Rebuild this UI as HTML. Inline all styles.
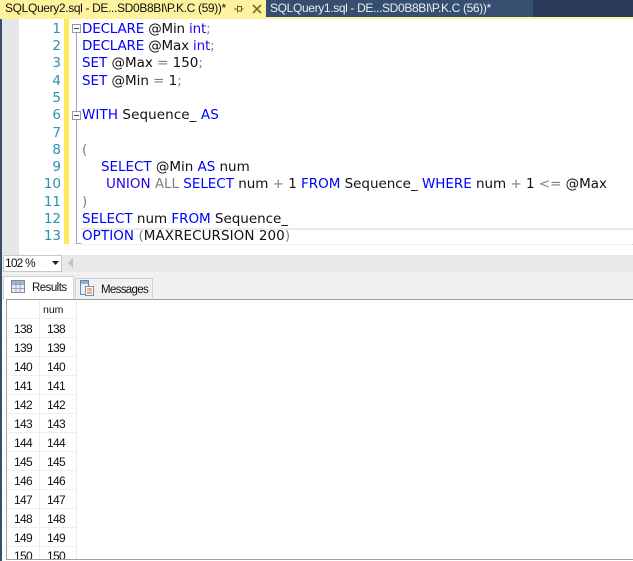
<!DOCTYPE html>
<html>
<head>
<meta charset="utf-8">
<style>
html,body{margin:0;padding:0;width:633px;height:561px;overflow:hidden;background:#fff}
div{position:absolute}
#root{left:0;top:0;width:633px;height:561px;overflow:hidden;background:#fff}
.code{left:82px;font:13.5px/17px "DejaVu Sans",Verdana,sans-serif;white-space:pre;color:#111;letter-spacing:-.03px}
.ln{left:20px;width:41px;text-align:right;font:13.5px/17px "DejaVu Sans",sans-serif;color:#2b91af}
.k{color:#0000ff}.g{color:#808080}.f{color:#2a00f0}
.tab{font:12px/17px "Liberation Sans",sans-serif;white-space:pre;top:0;letter-spacing:-.35px}
.cell{font:12px/19px "Liberation Sans",sans-serif;color:#111;text-align:left;letter-spacing:-.7px}
.fold{width:7px;height:7px;border:1px solid #999;background:#fff;box-sizing:content-box}
.fold:after{content:"";position:absolute;left:1px;top:3px;width:5px;height:1px;background:#444}
.r{left:0;width:70px;height:1px;background:#eeeef0}
</style>
</head>
<body>
<div id="root">
  <!-- tab strip -->
  <div style="left:0;top:0;width:633px;height:17px;background:#2a3b5a"></div>
  <div style="left:266px;top:0;width:267px;height:17px;background:#364e6f"></div>
  <div style="left:0;top:0;width:266px;height:17px;background:#fff29d"></div>
  <div style="left:0;top:17px;width:633px;height:2px;background:#fff29d"></div>
  <div class="tab" style="left:5px;color:#111">SQLQuery2.sql - DE...SD0B8BI\P.K.C (59))*</div>
  <div class="tab" style="left:270px;color:#e8eef6">SQLQuery1.sql - DE...SD0B8BI\P.K.C (56))*</div>
  <svg style="position:absolute;left:232px;top:3px" width="34" height="12" viewBox="0 0 34 12">
    <path d="M2 6h3M5.500 3.500h4v4.500h-4zM5.500 2.500v7M9.500 6h2" stroke="#6b5f2a" fill="none"/>
    <path d="M21 2l8 8M29 2l-8 8" stroke="#75693a" stroke-width="1.600" fill="none"/>
  </svg>

  <!-- left window edge -->
  <div style="left:0;top:19px;width:19px;height:236px;background:#e6e7e8"></div>
  <div style="left:0;top:19px;width:2px;height:542px;background:#3b4d6e"></div>

  <!-- yellow modified bar -->
  <div style="left:64px;top:19px;width:5px;height:225px;background:#fdeb5c"></div>

  <!-- outline guide -->
  <div style="left:76px;top:28px;width:1px;height:216px;background:#a8a8a8"></div>
  <div style="left:76px;top:243px;width:5px;height:1px;background:#a8a8a8"></div>

  <!-- current line -->
  <div style="left:81px;top:228px;width:552px;height:14px;border-top:2px solid #eaeaea;border-bottom:1px dotted #d8d8e0"></div>

  <!-- line numbers -->
  <div class="ln" style="top:21px">1</div>
  <div class="ln" style="top:38px">2</div>
  <div class="ln" style="top:55px">3</div>
  <div class="ln" style="top:73px">4</div>
  <div class="ln" style="top:90px">5</div>
  <div class="ln" style="top:107px">6</div>
  <div class="ln" style="top:125px">7</div>
  <div class="ln" style="top:142px">8</div>
  <div class="ln" style="top:159px">9</div>
  <div class="ln" style="top:176px">10</div>
  <div class="ln" style="top:194px">11</div>
  <div class="ln" style="top:211px">12</div>
  <div class="ln" style="top:228px">13</div>

  <div class="fold" style="left:72px;top:24px"></div>
  <div class="fold" style="left:72px;top:111px"></div>

  <!-- code -->
  <div class="code" style="top:21px;letter-spacing:-.18px"><span class="k">DECLARE</span> @Min <span class="f">int</span><span class="g">;</span></div>
  <div class="code" style="top:38px;letter-spacing:-.18px"><span class="k">DECLARE</span> @Max <span class="f">int</span><span class="g">;</span></div>
  <div class="code" style="top:55px"><span class="k">SET</span> @Max <span class="g">=</span> 150<span class="g">;</span></div>
  <div class="code" style="top:73px"><span class="k">SET</span> @Min <span class="g">=</span> 1<span class="g">;</span></div>
  <div class="code" style="top:107px;letter-spacing:.08px"><span class="k">WITH</span> Sequence_ <span class="k">AS</span></div>
  <div class="code" style="top:142px"><span class="g">(</span></div>
  <div class="code" style="top:159px;left:101px"><span class="k">SELECT</span> @Min <span class="k">AS</span> num</div>
  <div class="code" style="top:176px;left:106px"><span class="f">UNION</span> <span class="g">ALL</span> <span class="k">SELECT</span> num <span class="g">+</span> 1 <span class="k">FROM</span> Sequence_ <span class="k">WHERE</span> num <span class="g">+</span> 1 <span class="g">&lt;=</span> @Max</div>
  <div class="code" style="top:194px"><span class="g">)</span></div>
  <div class="code" style="top:211px"><span class="k">SELECT</span> num <span class="k">FROM</span> Sequence_</div>
  <div class="code" style="top:228px;letter-spacing:.06px"><span class="k">OPTION</span> <span class="g">(</span>MAXRECURSION 200<span class="g">)</span></div>

  <!-- zoom bar -->
  <div style="left:2px;top:255px;width:631px;height:17px;background:#e9e9ec"></div>
  <div style="left:3px;top:255px;width:57px;height:15px;background:#fff;border:1px solid #c8c8cc;box-sizing:content-box"></div>
  <div style="left:5px;top:255px;font:12px/17px 'Liberation Sans',sans-serif;color:#111;letter-spacing:-.85px">102 %</div>
  <svg style="position:absolute;left:52px;top:261px" width="8" height="5"><path d="M0 0h7L3.500 4z" fill="#222"/></svg>
  <svg style="position:absolute;left:67px;top:258px" width="8" height="10"><path d="M6 0v10L1 5z" fill="#c4c4c8"/></svg>

  <!-- results tab area -->
  <div style="left:2px;top:272px;width:631px;height:27px;background:#f0f0f0"></div>
  <div style="left:3px;top:276px;width:71px;height:24px;background:#fff;border:1px solid #d0d0d0;border-bottom:none;box-sizing:border-box"></div>
  <div style="left:75px;top:278px;width:78px;height:20px;background:#f0f0f0;border:1px solid #d0d0d0;border-bottom:none;box-sizing:border-box"></div>
  <svg style="position:absolute;left:11px;top:280px" width="14" height="13">
    <rect x=".5" y=".5" width="13" height="12" fill="#e8edf6" stroke="#7d8ba8"/>
    <rect x="1" y="1" width="12" height="3" fill="#9fb2d2"/>
    <path d="M5 1v11M9 1v11M1 4.500h12M1 8.500h12" stroke="#9aa5bb"/>
  </svg>
  <svg style="position:absolute;left:80px;top:280px" width="14" height="16">
    <rect x=".5" y=".5" width="8" height="14" fill="#eef2f8" stroke="#6d86a8"/>
    <rect x="1" y="1" width="7" height="3" fill="#8eb0d8"/>
    <rect x="5.500" y="6.500" width="8" height="9" fill="#fff" stroke="#8a8a8a"/>
    <path d="M7 9h5" stroke="#d05a3a"/><path d="M7 11h5" stroke="#d8a23a"/><path d="M7 13h5" stroke="#4a7ab8"/>
  </svg>
  <div style="left:32px;top:280px;font:11.5px/16px 'Liberation Sans',sans-serif;color:#111;letter-spacing:-.54px">Results</div>
  <div style="left:101px;top:282px;font:11.5px/16px 'Liberation Sans',sans-serif;color:#111;letter-spacing:-.67px">Messages</div>

  <!-- grid frame -->
  <div style="left:6px;top:299px;width:627px;height:261px;background:#fff;border-top:1px solid #a0a0a0;border-left:1px solid #a0a0a0;border-bottom:1px solid #a0a0a0;box-sizing:border-box;overflow:hidden">
    <div style="left:0;top:0;width:70px;height:260px;overflow:hidden">
      <div style="left:32px;top:0;width:1px;height:260px;background:#eeeef0"></div>
      <div style="left:69px;top:0;width:1px;height:260px;background:#eeeef0"></div>
      <div class="r" style="top:18px"></div>
      <div class="r" style="top:37px"></div>
      <div class="r" style="top:56px"></div>
      <div class="r" style="top:75px"></div>
      <div class="r" style="top:94px"></div>
      <div class="r" style="top:113px"></div>
      <div class="r" style="top:132px"></div>
      <div class="r" style="top:151px"></div>
      <div class="r" style="top:170px"></div>
      <div class="r" style="top:189px"></div>
      <div class="r" style="top:208px"></div>
      <div class="r" style="top:227px"></div>
      <div class="r" style="top:246px"></div>
      <div class="cell" style="left:36px;top:1px;font-size:10.500px;letter-spacing:0">num</div>
      <div class="cell" style="left:7px;top:20px">138</div><div class="cell" style="left:40px;top:20px">138</div>
      <div class="cell" style="left:7px;top:39px">139</div><div class="cell" style="left:40px;top:39px">139</div>
      <div class="cell" style="left:7px;top:58px">140</div><div class="cell" style="left:40px;top:58px">140</div>
      <div class="cell" style="left:7px;top:77px">141</div><div class="cell" style="left:40px;top:77px">141</div>
      <div class="cell" style="left:7px;top:96px">142</div><div class="cell" style="left:40px;top:96px">142</div>
      <div class="cell" style="left:7px;top:115px">143</div><div class="cell" style="left:40px;top:115px">143</div>
      <div class="cell" style="left:7px;top:134px">144</div><div class="cell" style="left:40px;top:134px">144</div>
      <div class="cell" style="left:7px;top:153px">145</div><div class="cell" style="left:40px;top:153px">145</div>
      <div class="cell" style="left:7px;top:172px">146</div><div class="cell" style="left:40px;top:172px">146</div>
      <div class="cell" style="left:7px;top:191px">147</div><div class="cell" style="left:40px;top:191px">147</div>
      <div class="cell" style="left:7px;top:210px">148</div><div class="cell" style="left:40px;top:210px">148</div>
      <div class="cell" style="left:7px;top:229px">149</div><div class="cell" style="left:40px;top:229px">149</div>
      <div class="cell" style="left:7px;top:247px">150</div><div class="cell" style="left:40px;top:247px">150</div>
    </div>
  </div>
</div>
</body>
</html>
